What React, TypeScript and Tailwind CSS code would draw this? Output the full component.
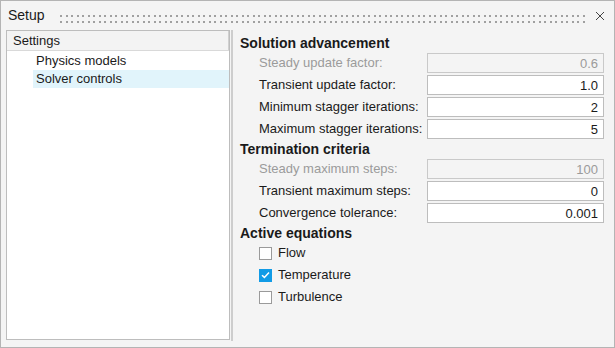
import React from "react";

const font = { fontFamily: '"Liberation Sans", Arial, sans-serif' };

function Field({ label, value, disabled }: { label: string; value: string; disabled?: boolean }) {
  return (
    <div className="flex h-[20px] items-center">
      <div className={`w-[168px] pl-[19px] box-content text-[13px] leading-[20px] ${disabled ? "text-[#9b9b9b]" : "text-[#1a1a1a]"}`}>{label}</div>
      <input
        readOnly
        value={value}
        className={`h-[20px] w-[177px] border text-right pr-[5px] text-[13px] outline-none ${disabled ? "border-[#c9c9c9] bg-[#f4f4f4] text-[#9b9b9b]" : "border-[#bdbdbd] bg-white text-[#1a1a1a]"}`}
        style={font}
      />
    </div>
  );
}

function Check({ label, checked }: { label: string; checked?: boolean }) {
  return (
    <div className="flex h-[20px] items-center pl-[19px]">
      {checked ? (
        <div className="flex h-[13px] w-[13px] items-center justify-center bg-[#119be6]">
          <svg width="9" height="8" viewBox="0 0 9 8">
            <path d="M1 4.2 L3.4 6.4 L8 1.4" stroke="white" strokeWidth="1.5" fill="none" />
          </svg>
        </div>
      ) : (
        <div className="h-[13px] w-[13px] border border-[#9a9a9a] bg-white" />
      )}
      <span className="ml-[6px] text-[13px] text-[#1a1a1a]">{label}</span>
    </div>
  );
}

function Heading({ children }: { children: React.ReactNode }) {
  return <div className="h-[20px] text-[14px] font-bold leading-[20px] text-[#1a1a1a]">{children}</div>;
}

export default function App() {
  return (
    <div className="flex h-[348px] w-[615px] flex-col border border-[#b4b4b4] bg-[#f4f4f4]" style={font}>
      <div className="flex h-[29px] items-center">
        <span className="ml-[7px] text-[14px] text-[#1a1a1a]">Setup</span>
        <div className="ml-[15px] mr-[10px] mt-[7px] h-[8px] flex-1">
          <svg width="100%" height="8">
            <defs>
              <pattern id="dots" x="0" y="0" width="11" height="8" patternUnits="userSpaceOnUse">
                <rect x="0" y="0" width="2" height="2" fill="#a0a0a0" />
                <rect x="6" y="0" width="2" height="2" fill="#a0a0a0" />
                <rect x="0" y="6" width="2" height="2" fill="#a0a0a0" />
                <rect x="6" y="6" width="2" height="2" fill="#a0a0a0" />
              </pattern>
            </defs>
            <rect x="0" y="0" width="100%" height="8" fill="url(#dots)" />
          </svg>
        </div>
        <svg width="10" height="10" viewBox="0 0 10 10" className="mr-[9px]">
          <path d="M1 1 L9 9 M9 1 L1 9" stroke="#444" strokeWidth="1" />
        </svg>
      </div>
      <div className="flex flex-1 pb-[6px] pl-[5px]">
        <div className="flex w-[224px] flex-col border border-[#bdbdbd] bg-white mb-[1px]">
          <div className="flex h-[20px] items-center border-b border-[#d9d9d9] bg-[#f3f3f3]">
            <div className="flex h-full flex-1 items-center border-r border-[#d0d0d0] pl-[6px] text-[13px] text-[#1a1a1a]">Settings</div>
          </div>
          <div className="pt-[1px]">
            <div className="ml-[26px] h-[18px] pl-[3px] text-[13px] leading-[18px] text-[#1a1a1a]">Physics models</div>
            <div className="ml-[26px] h-[18px] bg-[#e1f4fb] pl-[3px] text-[13px] leading-[18px] text-[#1a1a1a]">Solver controls</div>
          </div>
        </div>
        <div className="ml-[1px] w-[2px] bg-[#cdcdcd]" />
        <div className="ml-[7px] flex flex-col pt-[3px]">
          <Heading>Solution advancement</Heading>
          <div className="flex flex-col gap-[2px]">
            <Field label="Steady update factor:" value="0.6" disabled />
            <Field label="Transient update factor:" value="1.0" />
            <Field label="Minimum stagger iterations:" value="2" />
            <Field label="Maximum stagger iterations:" value="5" />
          </div>
          <Heading>Termination criteria</Heading>
          <div className="flex flex-col gap-[2px]">
            <Field label="Steady maximum steps:" value="100" disabled />
            <Field label="Transient maximum steps:" value="0" />
            <Field label="Convergence tolerance:" value="0.001" />
          </div>
          <Heading>Active equations</Heading>
          <div className="flex flex-col gap-[2px]">
            <Check label="Flow" />
            <Check label="Temperature" checked />
            <Check label="Turbulence" />
          </div>
        </div>
      </div>
    </div>
  );
}
